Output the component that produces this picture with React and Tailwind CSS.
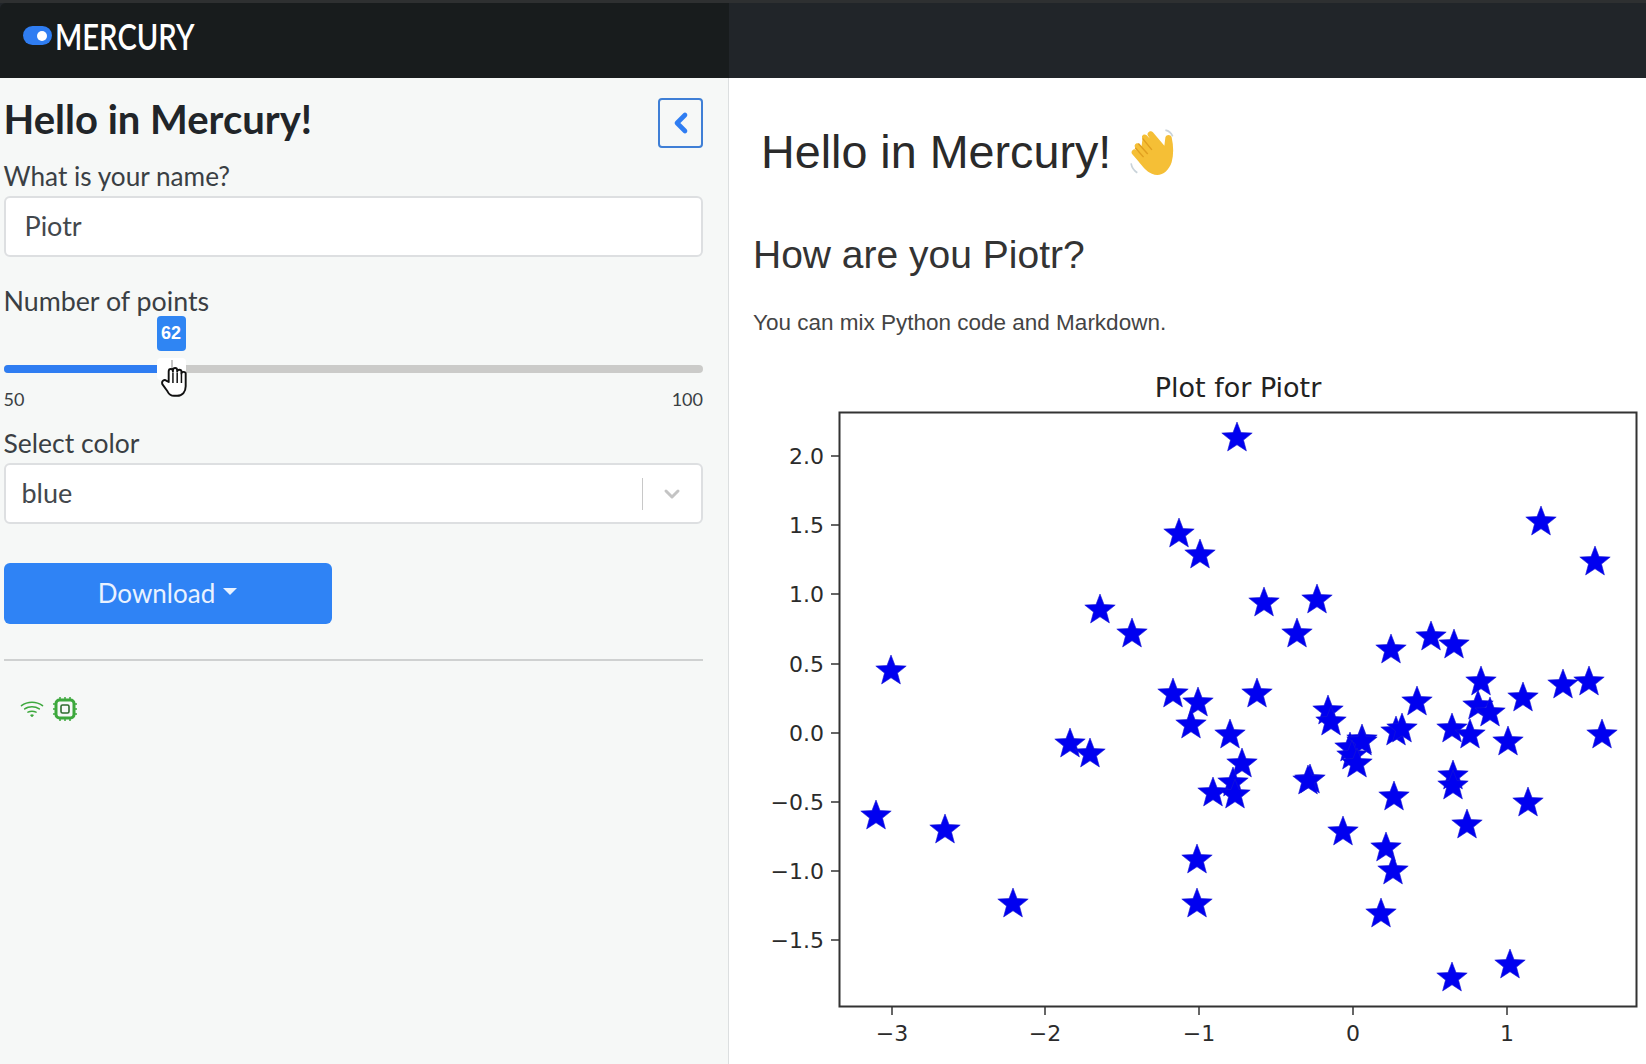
import React from 'react';
import { ChevronLeft, ChevronDown } from 'lucide-react';
import { BsWifi } from 'react-icons/bs';

// star centres read off the plot, in page pixels
const stars = [
  [891, 670], [1179, 533], [1100, 609], [1132, 633], [1173, 693], [1237, 437], [1200, 554], [1541, 521],
  [1595, 561], [1264, 602], [1317, 599], [1297, 633], [1391, 649], [1431, 636], [1454, 644], [1481, 681],
  [1523, 697], [1563, 684], [1589, 681], [1602, 734], [1417, 701], [1328, 710], [1331, 721], [1257, 693],
  [1198, 702], [1230, 734], [1191, 724], [1362, 739], [1396, 731], [1402, 728], [1452, 728], [1470, 734],
  [1478, 705], [1490, 712], [1508, 741], [1070, 743], [1090, 753], [876, 815], [945, 829], [1013, 903],
  [1197, 859], [1197, 903], [1242, 763], [1233, 782], [1213, 792], [1235, 794], [1310, 779], [1308, 780],
  [1394, 796], [1453, 775], [1453, 785], [1528, 802], [1467, 824], [1343, 831], [1386, 847], [1393, 870],
  [1381, 913], [1452, 977], [1510, 964], [1350, 747], [1362, 741], [1352, 755], [1357, 763],
];

const yTicks = [
  ['2.0', 455], ['1.5', 524], ['1.0', 593], ['0.5', 663], ['0.0', 732],
  ['−0.5', 801], ['−1.0', 870], ['−1.5', 939],
];
const xTicks = [['−3', 892], ['−2', 1045], ['−1', 1199], ['0', 1353], ['1', 1507]];

const starPoints = (cx, cy) => {
  const pts = [];
  for (let i = 0; i < 10; i++) {
    const r = i % 2 === 0 ? 16 : 6.8;
    const a = (Math.PI / 5) * i - Math.PI / 2;
    pts.push(`${(cx + r * Math.cos(a)).toFixed(1)},${(cy + r * Math.sin(a)).toFixed(1)}`);
  }
  return pts.join(' ');
};

const ScatterPlot = () => (
  <svg viewBox="729 365 917 699" className="block w-[917px] h-[699px]" style={{ fontFamily: '"DejaVu Sans", sans-serif' }}>
    <text x="1238" y="396" textAnchor="middle" fontSize="27" fill="#222">Plot for Piotr</text>
    <rect x="839.5" y="411.5" width="797" height="594" fill="#fff" stroke="#333" strokeWidth="2" />
    {yTicks.map(([label, y]) => (
      <g key={label}>
        <line x1="831" x2="839" y1={y} y2={y} stroke="#333" strokeWidth="1.5" />
        <text x="824" y={y + 8} textAnchor="end" fontSize="22" fill="#2b2b2b">{label}</text>
      </g>
    ))}
    {xTicks.map(([label, x]) => (
      <g key={label}>
        <line x1={x} x2={x} y1="1006" y2="1014" stroke="#333" strokeWidth="1.5" />
        <text x={x} y="1040" textAnchor="middle" fontSize="22" fill="#2b2b2b">{label}</text>
      </g>
    ))}
    {stars.map(([x, y], i) => (
      <polygon key={i} points={starPoints(x, y)} fill="#0000f0" stroke="#1a1ad0" strokeWidth="0.6" />
    ))}
  </svg>
);

const WaveEmoji = () => (
  <svg viewBox="0 0 50 50" className="w-[52px] h-[52px] ml-[18px] mt-[3px] shrink-0">
    <path d="M2 34q1 6 6 9" fill="none" stroke="#c9d3da" strokeWidth="1.6" />
    <path d="M35 2q5 1 7 6" fill="none" stroke="#c9d3da" strokeWidth="1.6" />
    <path
      d="M13 10c-2-3 2-5 4-3l3 3-2-3c-1-3 3-5 5-3l11 13 1-8c1-3 5-3 6 0 2 9 2 17 0 24-3 9-11 15-19 11-5-2-9-7-13-12L3 25c-2-3 2-6 4-4l2 2-3-4c-2-3 2-6 4-3l2 2z"
      fill="#f5bf36"
    />
    <path d="M13 10l9 11M9 15l9 10M6 19l8 9" fill="none" stroke="#e09f1f" strokeWidth="1.4" />
  </svg>
);

const ChipIcon = () => (
  <svg viewBox="0 0 26 26" className="w-[26px] h-[26px]" fill="none" stroke="currentColor">
    <rect x="4" y="4" width="18" height="18" rx="3.5" strokeWidth="3" />
    <rect x="9" y="9" width="8" height="8" rx="1.5" stroke="#2f6b2f" strokeWidth="1.6" />
    <path d="M8 1v3M13 1v3M18 1v3M8 22v3M13 22v3M18 22v3M1 8h3M1 13h3M1 18h3M22 8h3M22 13h3M22 18h3" strokeWidth="1.5" />
  </svg>
);

const HandCursor = () => (
  <svg viewBox="0 0 28 32" className="absolute left-[159px] top-[365px] w-[30px] h-[34px]">
    <path
      d="M9 16V6c0-3 4-3 4 0v-1c0-3 4-3 4 0v1c0-2 4-2 4 0v2c0-2 4-2 4 0v12c0 5-3 9-8 9h-3c-3 0-5-2-6-4l-5-7c-1-3 2-5 4-3z"
      fill="#fff"
      stroke="#111"
      strokeWidth="1.8"
      strokeLinejoin="round"
    />
    <path d="M13 7v10M17 7v10M21 8v9" stroke="#111" strokeWidth="1.4" fill="none" />
  </svg>
);

export default function App() {
  return (
    <div className="relative h-[1064px] overflow-hidden bg-white flex flex-col font-['Noto_Sans',sans-serif]">
      {/* Top bar */}
      <header className="h-[78px] shrink-0 flex border-t-[3px] border-[#2e3031] bg-[#212529]">
        <div className="w-[729px] bg-[#181c1d] flex items-center pl-[23px] pb-[10px] gap-[3px] rounded-tl-md">
          <div className="w-[29px] h-[19px] rounded-full bg-[#2f7df2] flex items-center justify-end pr-[5px]">
            <div className="w-[10px] h-[10px] rounded-full bg-white" />
          </div>
          <span className="font-['Lato',sans-serif] text-[36px] font-semibold text-white leading-none origin-left scale-x-[0.81]">MERCURY</span>
        </div>
      </header>

      <div className="flex flex-1 min-h-0">
        {/* Sidebar */}
        <aside className="w-[729px] shrink-0 bg-[#f6f8f7] border-r border-[#dcdfe0] pl-[3.5px] pr-[25px] font-['Lato',sans-serif]">
          <div className="flex items-center justify-between pt-[19px] h-[70px]">
            <h1 className="-mt-[8px] text-[40px] font-bold text-[#212529] leading-none">Hello in Mercury!</h1>
            <button className="w-[45px] h-[50px] border-2 border-[#3f7fd6] rounded flex items-center justify-center">
              <ChevronLeft className="w-8 h-8 text-[#2f7df2]" strokeWidth={3.5} />
            </button>
          </div>

          <label className="block mt-[13px] text-[26.2px] leading-[30px] text-[#3a3f44]">What is your name?</label>
          <div className="mt-[5px] h-[61px] bg-white border-2 border-[#dddfe1] rounded-md flex items-center pl-[19px] text-[27px] text-[#43484d]">Piotr</div>

          <label className="block mt-[29px] text-[26.8px] leading-[30px] text-[#3a3f44]">Number of points</label>
          <div className="relative h-[83px]">
            <div className="absolute left-[153px] top-0 w-[29px] h-[35px] rounded bg-[#2f85f3] text-white text-[18px] font-bold flex items-center justify-center font-['Liberation_Sans',sans-serif]">62</div>
            <div className="absolute left-0 right-0 top-[49px] h-2 rounded-full bg-[#cbcbc9]" />
            <div className="absolute left-0 w-[153px] top-[49px] h-2 rounded-l-full bg-[#2f7df2]" />
            <div className="absolute left-[153px] top-[42px] w-[29px] h-[22px] rounded bg-white" />
            <div className="absolute left-[167px] top-[44px] w-[2px] h-[10px] bg-[#c4c4c4]" />
            <div className="absolute left-0 right-0 top-[71px] flex justify-between text-[18px] leading-[24px] text-[#3a3f44]">
              <span>50</span>
              <span>100</span>
            </div>
          </div>

          <label className="block mt-[29px] text-[26.5px] leading-[30px] text-[#3a3f44]">Select color</label>
          <div className="mt-[5px] h-[61px] bg-white border-2 border-[#dddfe1] rounded-md flex items-center pl-[16px] text-[27px] text-[#43484d]">
            <span className="flex-1">blue</span>
            <div className="w-px h-[32px] bg-[#c8c8c8]" />
            <ChevronDown className="w-6 h-6 mx-[17px] text-[#c4c4c4]" strokeWidth={3} />
          </div>

          <button className="mt-[39px] w-[328px] h-[61px] rounded-md bg-[#2f83f5] text-[#e9f2ff] text-[26px] flex items-center justify-center gap-2">
            Download
            <span className="w-0 h-0 border-x-[7px] border-x-transparent border-t-[7px] border-t-[#e9f2ff] -mt-1" />
          </button>

          <hr className="mt-[35px] border-t-2 border-[#cfd1d1]" />

          <div className="flex items-center gap-[8px] mt-[35px] pl-[16px] text-[#3da83d]">
            <BsWifi className="w-[24px] h-[24px]" />
            <ChipIcon />
          </div>
        </aside>

        {/* Notebook */}
        <main className="flex-1 min-w-0 font-['Liberation_Sans',sans-serif]">
          <div className="flex items-center pl-[32px] pt-[48px] h-[101px]">
            <h1 className="text-[46.7px] leading-none text-[#2a2a2a]">Hello in Mercury!</h1>
            <WaveEmoji />
          </div>
          <h2 className="pl-[24px] mt-[54px] text-[39px] leading-[44px] text-[#333]">How are you Piotr?</h2>
          <p className="pl-[24px] mt-[31px] text-[22.5px] leading-[30px] text-[#444]">You can mix Python code and Markdown.</p>
          <div className="mt-[28px]">
            <ScatterPlot />
          </div>
        </main>
      </div>

      <HandCursor />
    </div>
  );
}
